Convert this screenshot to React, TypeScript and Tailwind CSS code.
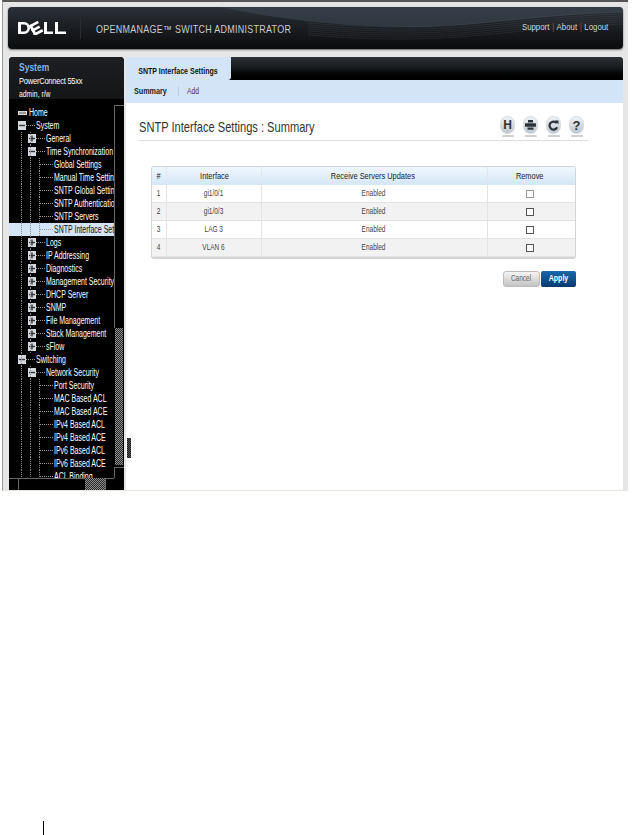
import React from 'react';

const F = { fontFamily: '"Liberation Sans", Arial, sans-serif' };

type Row = { t: string; d: number; k: 'plus' | 'minus' | 'home' | 'leaf'; sel?: boolean };

const rows: Row[] = [
  { t: 'Home', d: 0, k: 'home' },
  { t: 'System', d: 0, k: 'minus' },
  { t: 'General', d: 1, k: 'plus' },
  { t: 'Time Synchronization', d: 1, k: 'minus' },
  { t: 'Global Settings', d: 2, k: 'leaf' },
  { t: 'Manual Time Settings', d: 2, k: 'leaf' },
  { t: 'SNTP Global Settings', d: 2, k: 'leaf' },
  { t: 'SNTP Authentication', d: 2, k: 'leaf' },
  { t: 'SNTP Servers', d: 2, k: 'leaf' },
  { t: 'SNTP Interface Settings', d: 2, k: 'leaf', sel: true },
  { t: 'Logs', d: 1, k: 'plus' },
  { t: 'IP Addressing', d: 1, k: 'plus' },
  { t: 'Diagnostics', d: 1, k: 'plus' },
  { t: 'Management Security', d: 1, k: 'plus' },
  { t: 'DHCP Server', d: 1, k: 'plus' },
  { t: 'SNMP', d: 1, k: 'plus' },
  { t: 'File Management', d: 1, k: 'plus' },
  { t: 'Stack Management', d: 1, k: 'plus' },
  { t: 'sFlow', d: 1, k: 'plus' },
  { t: 'Switching', d: 0, k: 'minus' },
  { t: 'Network Security', d: 1, k: 'minus' },
  { t: 'Port Security', d: 2, k: 'leaf' },
  { t: 'MAC Based ACL', d: 2, k: 'leaf' },
  { t: 'MAC Based ACE', d: 2, k: 'leaf' },
  { t: 'IPv4 Based ACL', d: 2, k: 'leaf' },
  { t: 'IPv4 Based ACE', d: 2, k: 'leaf' },
  { t: 'IPv6 Based ACL', d: 2, k: 'leaf' },
  { t: 'IPv6 Based ACE', d: 2, k: 'leaf' },
  { t: 'ACL Binding', d: 2, k: 'leaf' },
];

function Box({ minus }: { minus?: boolean }) {
  return (
    <svg width="8" height="9" viewBox="0 0 8 9" className="shrink-0">
      <rect width="8" height="9" fill="#d5dadf" />
      <rect x="1" y="3.8" width="6" height="1.4" fill="#333" />
      {!minus && <rect x="3.3" y="1.5" width="1.4" height="6" fill="#333" />}
    </svg>
  );
}

function TreeRow({ r, i }: { r: Row; i: number }) {
  const pad = r.d === 0 ? 'pl-[9px]' : r.d === 1 ? 'pl-[19px]' : 'pl-[31px]';
  const g0 = i >= 2;
  const g1 = (i >= 2 && i <= 18) || i >= 20;
  const g2 = (i >= 4 && i <= 9) || i >= 21;
  return (
    <div className={`relative flex h-[13px] items-center whitespace-nowrap ${pad} ${r.sel ? 'bg-[#d3e4f6] text-[#111]' : 'text-white'}`}>
      {g0 && <span className="absolute left-[12px] top-0 h-[13px] border-l border-dotted border-[#888]" />}
      {g1 && <span className="absolute left-[21px] top-0 h-[13px] border-l border-dotted border-[#888]" />}
      {g2 && <span className="absolute left-[30px] top-0 h-[13px] border-l border-dotted border-[#888]" />}
      {r.k === 'home' && <span className="mr-[2px] h-[4px] w-[9px] shrink-0 border border-[#d8dde2] bg-[#999]" />}
      {(r.k === 'plus' || r.k === 'minus') && <Box minus={r.k === 'minus'} />}
      {(r.k === 'plus' || r.k === 'minus') && <span className="mr-[1px] w-[9px] shrink-0 border-t border-dotted border-[#999]" />}
      {r.k === 'leaf' && <span className="relative mr-[1px] w-[13px] shrink-0 border-t border-dotted border-[#999]" />}
      <span className="inline-block origin-left scale-x-[0.7] text-[10px] leading-[13px]">{r.t}</span>
    </div>
  );
}

function Round({ children }: { children: React.ReactNode }) {
  return (
    <div className="flex flex-col items-center">
      <div className="flex h-[18px] w-[15px] items-center justify-center rounded-full border border-[#d5dade] bg-gradient-to-b from-[#f2f4f6] to-[#bcc6cf]">
        {children}
      </div>
      <div className="mt-[1px] h-[2px] w-[12px] rounded-full bg-[#cfcfcf]" />
    </div>
  );
}

const tableRows = [
  ['1', 'gi1/0/1'],
  ['2', 'gi1/0/3'],
  ['3', 'LAG 3'],
  ['4', 'VLAN 6'],
];

function Nh({ children }: { children: React.ReactNode }) {
  return <span className="inline-block scale-x-[0.78] whitespace-nowrap">{children}</span>;
}
function Nd({ children }: { children: React.ReactNode }) {
  return <span className="inline-block scale-x-[0.72] whitespace-nowrap">{children}</span>;
}

const checker = 'bg-[repeating-conic-gradient(#8a8a8a_0_25%,#2a2a2a_0_50%)] bg-[length:2px_2px]';

export default function App() {
  return (
    <div className="relative h-[835px] w-[641px] overflow-hidden bg-white" style={F}>
      <div className="ml-[2px] h-[491px] w-[626px] border-b border-l border-t-[2px] border-b-[#e6e6dc] border-l-[#999] border-t-[#555] bg-[#e6e6e6] pl-[5px] pt-[5px]">
        {/* Header */}
        <div className="relative flex h-[42px] w-[615px] items-center overflow-hidden rounded-[4px] bg-gradient-to-b from-[#2c323a] via-[#1a1d21] to-[#0c0c0d] shadow-[0_1px_2px_#666]">
          <svg className="absolute inset-0" width="615" height="42" viewBox="0 0 615 42">
            <path d="M212 0 C270 12 330 20 400 20 C470 20 520 8 615 5 L615 0 Z" fill="#3c4753" opacity="0.6" />
            {[0, 2, 4, 6, 8, 10, 12].map((o) => (
              <path key={o} d={`M300 ${16 + o} C350 ${20 + o} 370 ${20 + o} 400 ${20 + o} C470 ${20 + o} 520 ${8 + o} 615 ${5 + o}`} fill="none" stroke="#ffffff" strokeOpacity="0.07" strokeWidth="1" />
            ))}
          </svg>
          <svg className="relative ml-[10px] shrink-0" width="49" height="14" viewBox="0 0 49 14">
            <path fillRule="evenodd" d="M0 1 H6 A6 6 0 0 1 6 13 H0 Z M3 3.6 V10.4 H6 A3.4 3.4 0 0 0 6 3.6 Z" fill="#fff" />
            <g transform="rotate(-28 19 7)" fill="#fff">
              <rect x="13" y="1" width="2.8" height="12" />
              <rect x="13" y="1" width="10" height="2.6" />
              <rect x="13" y="5.7" width="9" height="2.6" />
              <rect x="13" y="10.4" width="10" height="2.6" />
            </g>
            <path d="M26 1 H29 V10.4 H35 V13 H26 Z M37 1 H40 V10.4 H48 V13 H37 Z" fill="#fff" />
          </svg>
          <span className="relative ml-[13px] h-[22px] w-[1px] shrink-0 bg-[#2a2d31]" />
          <div className="relative ml-[15px] origin-left scale-x-[0.85] whitespace-nowrap pt-[4px] text-[10.5px] tracking-[0.35px] text-[#c9cccf]">OPENMANAGE™ SWITCH ADMINISTRATOR</div>
          <div className="absolute right-[15px] top-[15px] flex origin-right scale-x-[0.87] gap-[3px] whitespace-nowrap text-[9px] leading-[11px] text-[#cdd6e0]">
            <span>Support</span><span className="text-[#c33]">|</span><span>About</span><span className="text-[#c33]">|</span><span>Logout</span>
          </div>
        </div>
        {/* Body */}
        <div className="relative ml-[1px] mt-[8px] flex h-[433px] w-[614px] gap-[2px]">
          {/* Sidebar */}
          <div className="flex w-[115px] shrink-0 flex-col overflow-hidden rounded-t-[4px] bg-black">
            <div className="h-[42px] shrink-0 bg-gradient-to-b from-[#1d1f22] to-[#141517] pl-[10px] pt-[4px] text-[9px] leading-[13px] text-white">
              <div className="origin-left scale-x-[0.85] whitespace-nowrap text-[10px] font-bold text-[#7fb2e5]">System</div>
              <div className="mt-[1px] origin-left scale-x-[0.84] whitespace-nowrap tracking-[-0.3px]">PowerConnect 55xx</div>
              <div className="origin-left scale-x-[0.76] whitespace-nowrap">admin, r/w</div>
            </div>
            <div className="flex min-h-0 flex-1">
              <div className="min-w-0 flex-1 overflow-hidden pt-[7px]">
                {rows.map((r, i) => <TreeRow key={r.t} r={r} i={i} />)}
              </div>
              <div className="flex w-[10px] shrink-0 flex-col pt-[6px]">
                <div className="h-[12px] border-l border-t border-[#666]" />
                <div className="h-[211px] border-l border-[#666]" />
                <div className={`ml-[1px] h-[137px] w-[8px] ${checker}`} />
                <div className="mt-[2px] flex-1 border-l border-t border-[#666]" />
              </div>
            </div>
            <div className="flex h-[12px] shrink-0">
              <div className="w-[10px] border-r border-t border-[#666]" />
              <div className="w-[66px] border-t border-[#666]" />
              <div className={`w-[20px] ${checker}`} />
              <div className="w-[9px] border-l border-t border-[#666]" />
            </div>
          </div>
          {/* Main */}
          <div className="flex min-w-0 flex-1 flex-col bg-white">
            <div className="flex h-[23px] shrink-0 overflow-hidden rounded-tr-[3px] bg-gradient-to-b from-[#2d3238] via-[#15181b] to-black">
              <div className="flex w-[105px] items-center justify-center rounded-br-[3px] bg-[#d3e4f6] pr-[2px] pt-[7px] text-[#111]">
                <span className="inline-block scale-x-[0.78] whitespace-nowrap text-[9px] font-bold">SNTP Interface Settings</span>
              </div>
            </div>
            <div className="flex h-[23px] shrink-0 items-center bg-[#d3e4f6] pl-[8px] text-[9px]">
              <span className="w-[36px] origin-left scale-x-[0.8] font-bold text-[#222]">Summary</span>
              <span className="ml-[8px] h-[9px] w-[1px] bg-[#b9cde2]" />
              <span className="ml-[8px] origin-left scale-x-[0.75] text-[#5a2a4a]">Add</span>
            </div>
            <div className="min-h-0 flex-1 pl-[13px] pr-[35px]">
              <div className="flex items-center justify-between border-b border-[#ddd] pb-[3px] pt-[13px]">
                <h1 className="origin-left scale-x-[0.74] whitespace-nowrap text-[15px] leading-none text-[#333]">SNTP Interface Settings : Summary</h1>
                <div className="mr-[4px] flex gap-[8px]">
                  <Round><span className="text-[12px] font-bold leading-none text-[#2c3338]">H</span></Round>
                  <Round>
                    <svg width="11" height="10" viewBox="0 0 11 10">
                      <rect x="3" width="5" height="2.5" fill="#2c3338" />
                      <rect y="3.2" width="11" height="3.6" rx="0.5" fill="#2c3338" />
                      <rect x="2.5" y="7.5" width="6" height="2.2" fill="#2c3338" />
                    </svg>
                  </Round>
                  <Round>
                    <svg width="11" height="11" viewBox="0 0 11 11">
                      <path d="M8.8 3.2 A4 4 0 1 0 9.2 7.2" fill="none" stroke="#2c3338" strokeWidth="2.2" />
                      <path d="M7 0.5 L10.5 0.5 L10.5 4.5 Z" fill="#2c3338" />
                    </svg>
                  </Round>
                  <Round><span className="text-[13px] font-bold leading-none text-[#2c3338]">?</span></Round>
                </div>
              </div>
              <div className="ml-[12px] mt-[25px] w-[425px]">
                <table className="w-full table-fixed border-separate border-spacing-0 overflow-hidden rounded-[3px] border-x border-b-2 border-t border-[#d2d4d6] text-center text-[9px] text-[#444]">
                  <thead>
                    <tr className="h-[18px] bg-gradient-to-b from-[#eef7fe] to-[#d5e6f6] text-[9.5px] text-[#222]">
                      <th className="w-[15px] border-r border-[#dfe6ec] font-normal"><Nh>#</Nh></th>
                      <th className="w-[95px] border-r border-[#dfe6ec] font-normal"><Nh>Interface</Nh></th>
                      <th className="w-[226px] border-r border-[#dfe6ec] pr-[3px] font-normal"><Nh>Receive Servers Updates</Nh></th>
                      <th className="pr-[3px] font-normal"><Nh>Remove</Nh></th>
                    </tr>
                  </thead>
                  <tbody>
                    {tableRows.map((r, i) => (
                      <tr key={r[0]} className={i % 2 ? 'h-[18px] bg-[#f2f2f2]' : 'h-[18px] bg-white'}>
                        <td className="border-b border-r border-[#e3e3e3]"><Nd>{r[0]}</Nd></td>
                        <td className="border-b border-r border-[#e3e3e3]"><Nd>{r[1]}</Nd></td>
                        <td className="border-b border-r border-[#e3e3e3] pr-[2px]"><Nd>Enabled</Nd></td>
                        <td className="border-b border-[#e3e3e3] pr-[3px]">
                          <span className={`mx-auto block h-[8px] w-[8px] border bg-white ${i === 0 ? 'border-[#999]' : 'border-[#555]'}`} />
                        </td>
                      </tr>
                    ))}
                  </tbody>
                </table>
                <div className="mt-[12px] flex justify-end gap-[1px]">
                  <div className="flex h-[16px] w-[37px] items-center justify-center rounded-[3px] border border-[#bbb] bg-gradient-to-b from-[#f4f4f4] to-[#c4c4c4] text-[9px] text-[#666]"><Nd>Cancel</Nd></div>
                  <div className="flex h-[16px] w-[35px] items-center justify-center rounded-[2px] bg-gradient-to-b from-[#1a66ad] to-[#0b3a70] text-[9px] font-bold text-white"><Nh>Apply</Nh></div>
                </div>
              </div>
            </div>
          </div>
          {/* Splitter grip lying over the content edge */}
          <div className="absolute left-[118px] top-[381px] h-[20px] w-[4px] bg-[repeating-conic-gradient(#555_0_25%,#1a1a1a_0_50%)] bg-[length:2px_2px]" />
        </div>
      </div>
      <div className="absolute left-[43px] top-[821px] h-[14px] w-[1px] bg-black" />
    </div>
  );
}
